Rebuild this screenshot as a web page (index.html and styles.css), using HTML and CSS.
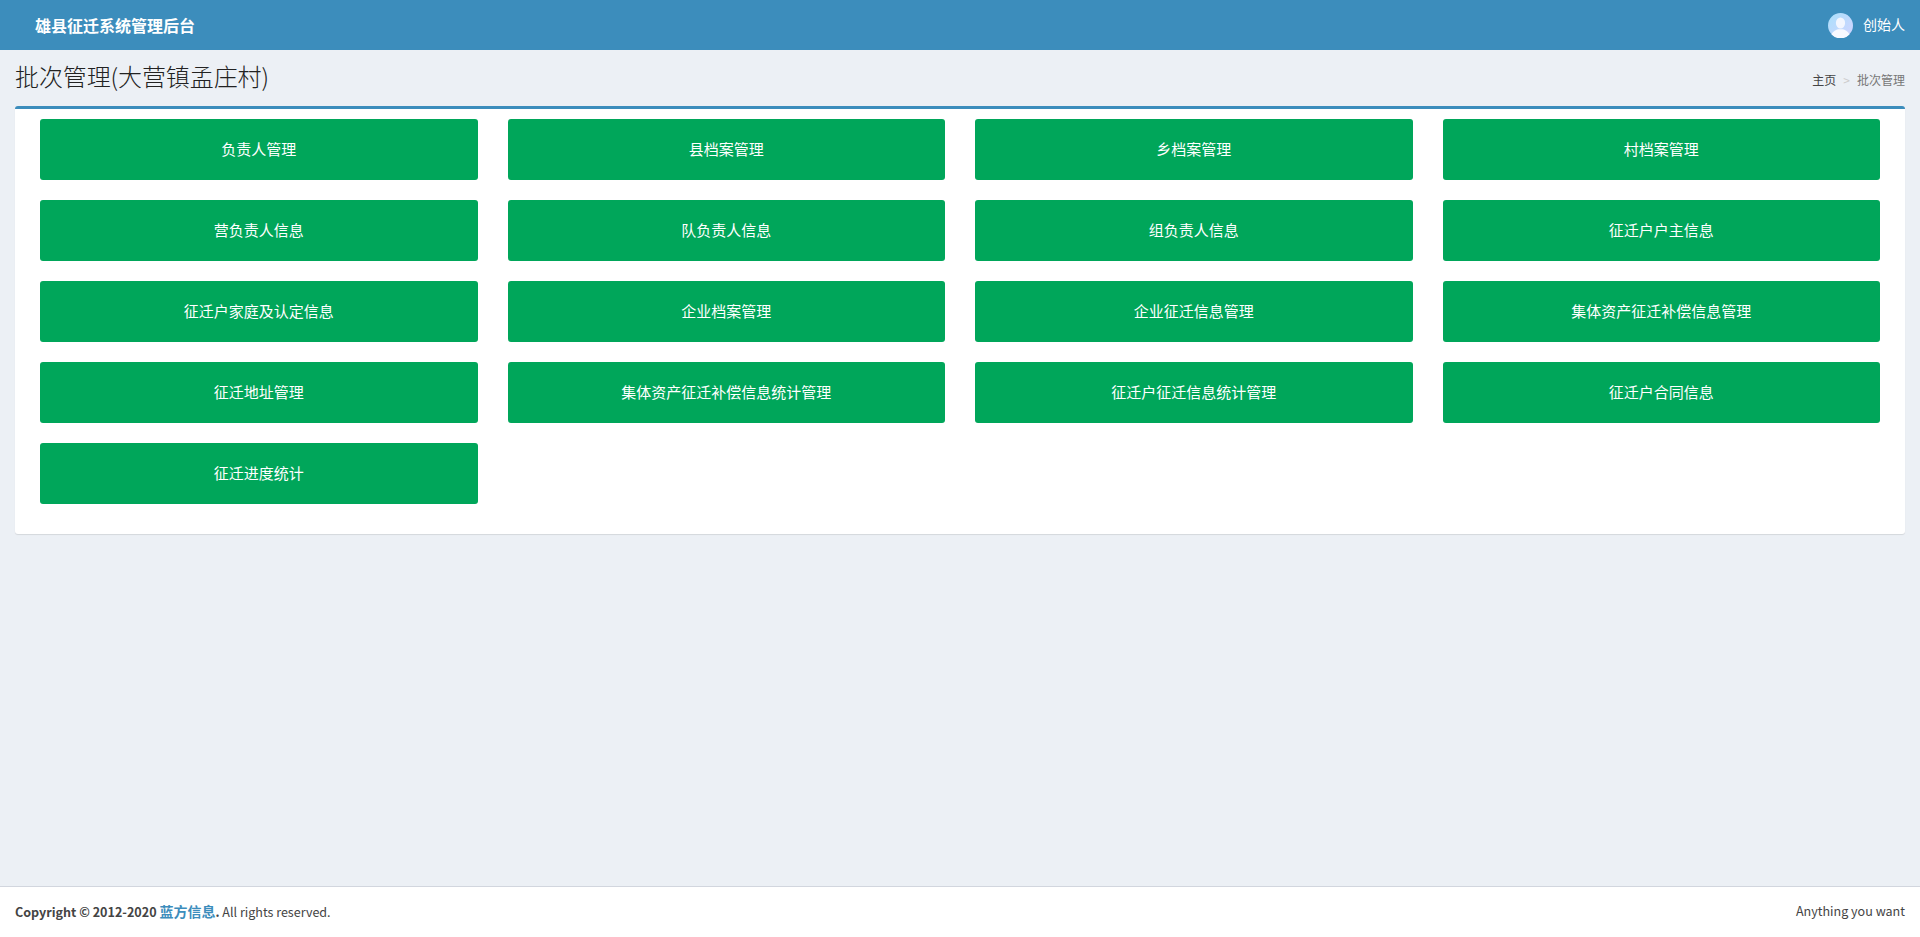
FILE: index.html
```html
<!DOCTYPE html>
<html lang="zh-CN">
<head>
<meta charset="utf-8">
<title>批次管理</title>
<link rel="stylesheet" href="styles.css">
</head>
<body>
<header class="topbar">
  <a class="logo">雄县征迁系统管理后台</a>
  <div class="user">
    <svg class="avatar" viewBox="0 0 25 25" width="25" height="25" aria-hidden="true">
      <defs>
        <linearGradient id="ag" x1="0" y1="0" x2="1" y2="1">
          <stop offset="0" stop-color="#a9e0fb"/>
          <stop offset="1" stop-color="#d3d3ff"/>
        </linearGradient>
      </defs>
      <circle cx="12.5" cy="12.5" r="12.5" fill="url(#ag)"/>
      <ellipse cx="12.5" cy="10" rx="4.6" ry="5.6" fill="#f3f6fe"/>
      <path d="M3.5 21.5c1.500-3.500 5-4.600 6.500-5.200h5c1.500.6 5 1.700 6.500 5.200A12.500 12.500 0 0 1 3.500 21.500z" fill="#f8f9ff"/>
    </svg>
    <span class="user-name">创始人</span>
  </div>
</header>
<section class="content-header">
  <h1 class="page-title">批次管理(大营镇孟庄村)</h1>
  <ol class="breadcrumb">
    <li class="crumb">主页</li>
    <li class="sep">&gt;</li>
    <li class="crumb-active">批次管理</li>
  </ol>
</section>
<main class="box">
  <a class="tile">负责人管理</a>
  <a class="tile">县档案管理</a>
  <a class="tile">乡档案管理</a>
  <a class="tile">村档案管理</a>
  <a class="tile">营负责人信息</a>
  <a class="tile">队负责人信息</a>
  <a class="tile">组负责人信息</a>
  <a class="tile">征迁户户主信息</a>
  <a class="tile">征迁户家庭及认定信息</a>
  <a class="tile">企业档案管理</a>
  <a class="tile">企业征迁信息管理</a>
  <a class="tile">集体资产征迁补偿信息管理</a>
  <a class="tile">征迁地址管理</a>
  <a class="tile">集体资产征迁补偿信息统计管理</a>
  <a class="tile">征迁户征迁信息统计管理</a>
  <a class="tile">征迁户合同信息</a>
  <a class="tile">征迁进度统计</a>
</main>
<footer class="footer">
  <div class="copy"><strong>Copyright © 2012-2020 <a class="copy-link">蓝方信息</a>.</strong> All rights reserved.</div>
  <div class="motto">Anything you want</div>
</footer>
</body>
</html>
```
FILE: styles.css
```css
* { box-sizing: border-box; }
html, body { height: 100%; }
body {
  margin: 0;
  min-height: 937px;
  display: flex;
  flex-direction: column;
  background: #ecf0f5;
  color: #333;
  font-family: "Noto Sans CJK SC", "Noto Sans", sans-serif;
  font-size: 14px;
  line-height: 20px;
  overflow: hidden;
}
.topbar {
  height: 50px;
  flex: none;
  background: #3c8dbc;
  display: flex;
  align-items: center;
  justify-content: space-between;
  padding: 0 15px 0 35px;
  color: #fff;
}
.logo { font-size: 16px; font-weight: 700; }
.user { display: flex; align-items: center; gap: 10px; }
.avatar { display: block; }
.user-name { font-size: 14px; padding-bottom: 2px; }
.content-header {
  flex: none;
  height: 56px;
  padding: 12px 15px 0;
  display: flex;
  justify-content: space-between;
  align-items: flex-start;
}
.page-title {
  margin: 0;
  font-size: 24px;
  font-weight: 300;
  line-height: 28px;
  letter-spacing: -.1px;
  color: #222;
}
.breadcrumb {
  list-style: none;
  margin: 10px 0 0;
  padding: 0;
  display: flex;
  gap: 7px;
  font-size: 12px;
  line-height: 16px;
  color: #444;
}
.sep { color: #ccc; }
.crumb-active { color: #777; }
.box {
  flex: none;
  margin: 0 15px;
  padding: 10px 25px 30px;
  background: #fff;
  border-top: 3px solid #3c8dbc;
  border-radius: 3px;
  box-shadow: 0 1px 1px rgba(0, 0, 0, .1);
  display: grid;
  grid-template-columns: repeat(4, 1fr);
  gap: 20px 30px;
}
.tile {
  height: 61px;
  padding-bottom: 2px;
  background: #00a65a;
  border-radius: 3px;
  color: #fff;
  display: flex;
  align-items: center;
  justify-content: center;
  font-size: 15px;
}
.footer {
  flex: none;
  margin-top: auto;
  height: 51px;
  background: #fff;
  border-top: 1px solid #d2d6de;
  padding: 14px 15px;
  display: flex;
  justify-content: space-between;
  color: #444;
  font-size: 12.55px;
}
.copy-link { color: #3c8dbc; font-size: 14px; }
```
